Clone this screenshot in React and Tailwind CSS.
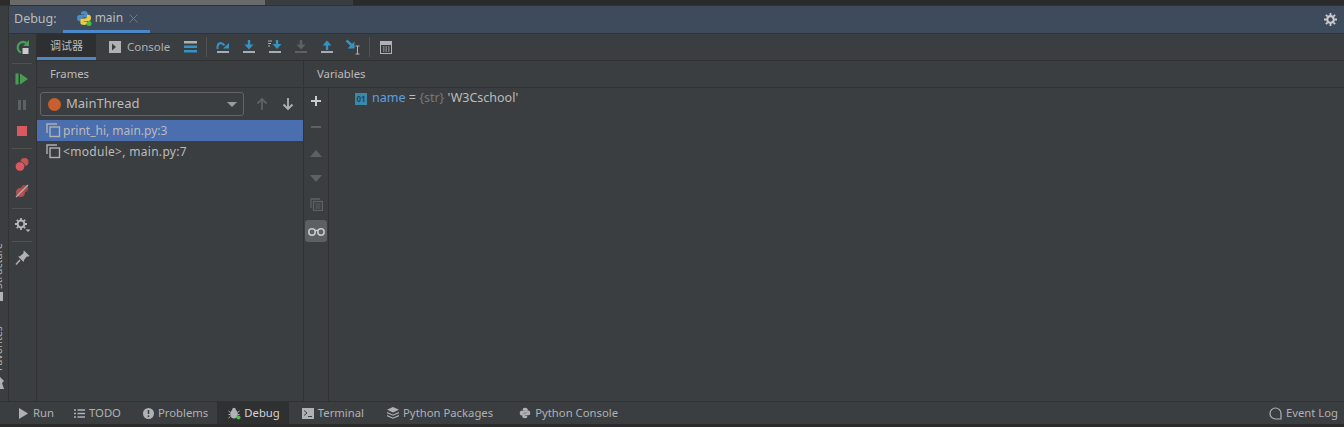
import React from 'react';

const BLUE = '#3592c4';
const GREY = '#afb1b3';
const BAR = '#a9adb0';

const Sep = () => <div className="w-px h-5 bg-[#515151]" />;
const VSep = ({ h }) => (
    <div className={`flex items-center justify-center shrink-0 w-full ${h}`}>
        <div className="h-px w-5 bg-[#515151]" />
    </div>
);
const Slot = ({ children }) => (
    <div className="flex items-center justify-center w-full h-[26px] shrink-0">{children}</div>
);

const FrameIcon = () => (
    <svg width="15" height="15" viewBox="0 0 15 15" fill="none" stroke="#afb1b3" strokeWidth="1.4" className="shrink-0">
        <path d="M1 10V1h10" />
        <rect x="4" y="4" width="9.5" height="9.5" />
    </svg>
);

const StepIcon = ({ children }) => (
    <div className="flex justify-center w-[26px] shrink-0">
        <svg width="16" height="16" viewBox="0 0 16 16" fill="none">{children}</svg>
    </div>
);

const PythonLogo = ({ size = 16, dot }) => (
    <svg width={size} height={size} viewBox="0 0 16 16">
        <path d="M8 1C5.500 1 5 2 5 3v1.500h3.200V5H3.200C2 5 1 6 1 8s1 3.200 2.200 3.200H5V9.600c0-1 1-2 2-2h3c1 0 1.600-.8 1.600-1.600V3c0-1-1.400-2-3.600-2z" fill="#4a8cc4" />
        <path d="M8 15c2.500 0 3-1 3-2v-1.500H7.800V11h5C14 11 15 10 15 8s-1-3.200-2.200-3.200H11v1.600c0 1-1 2-2 2H6c-1 0-1.600.8-1.600 1.600v3c0 1 1.400 2 3.600 2z" fill="#e8c94a" />
        {dot && <circle cx="13" cy="13.500" r="2.500" fill="#3fc43f" />}
    </svg>
);

const TopToolbar = () => (
    <div className="flex items-center h-[27px] shrink-0 bg-[#3b3e40] border-b border-[#323232]">
        <div className="flex items-center justify-center w-[59px] h-full bg-[#2d2f30] border-b-[3px] border-[#4a88c7] text-[#bbbbbb] text-[11px]" style={{ fontFamily: '"Noto Sans CJK SC", sans-serif' }}>
            调试器
        </div>
        <div className="flex items-center ml-[13px] text-[#afb1b3] text-[11.500px]">
            <svg width="12" height="12" viewBox="0 0 12 12">
                <rect width="12" height="12" fill="#afb1b3" />
                <path d="M3 2.500L7 6l-4 3.500z" fill="#3b3e40" />
            </svg>
            <span className="ml-[6px]">Console</span>
        </div>
        <svg width="13" height="12" viewBox="0 0 13 12" className="ml-[14px]">
            <rect y="0" width="13" height="2.500" fill={GREY} />
            <rect y="4.500" width="13" height="2.500" fill={BLUE} />
            <rect y="9" width="13" height="2.500" fill={BLUE} />
        </svg>
        <div className="ml-[9px]"><Sep /></div>
        <div className="flex items-center ml-[3px]">
            <StepIcon>
                <path d="M2.500 10V8C2.500 4 6.500 2.500 9.500 6.500" stroke={BLUE} strokeWidth="2" />
                <path d="M8 9.500h6v-5.500z" fill={BLUE} />
                <rect x="2" y="12" width="12" height="2" fill={BAR} />
            </StepIcon>
            <StepIcon>
                <path d="M8 1v6" stroke={BLUE} strokeWidth="2.400" />
                <path d="M3.500 5.500h9L8 10.500z" fill={BLUE} />
                <rect x="2" y="12" width="12" height="2" fill={BAR} />
            </StepIcon>
            <StepIcon>
                <path d="M10 1v5" stroke={BLUE} strokeWidth="2.400" />
                <path d="M5.500 5h9L10 10z" fill={BLUE} />
                <path d="M1 2h4M1 4.500h3M1 7h2" stroke={GREY} strokeWidth="1" />
                <rect x="2" y="12" width="12" height="2" fill={BAR} />
            </StepIcon>
            <StepIcon>
                <path d="M8 1v6" stroke="#5e6163" strokeWidth="2.400" />
                <path d="M3.500 5.500h9L8 10.500z" fill="#5e6163" />
                <rect x="2" y="12" width="12" height="2" fill="#5e6163" />
            </StepIcon>
            <StepIcon>
                <path d="M8 11V5" stroke={BLUE} strokeWidth="2.400" />
                <path d="M3.500 6.500h9L8 1.500z" fill={BLUE} />
                <rect x="2" y="12" width="12" height="2" fill={BAR} />
            </StepIcon>
            <StepIcon>
                <path d="M1.500 1.500L7 6.500" stroke={BLUE} strokeWidth="2.400" />
                <path d="M9.500 2.500V9.500H2.500z" fill={BLUE} />
                <path d="M10.500 7h4M12.500 7v8M10.500 15h4" stroke={GREY} strokeWidth="1" />
            </StepIcon>
        </div>
        <div className="ml-[3px]"><Sep /></div>
        <svg width="12" height="13" viewBox="0 0 12 13" fill="none" stroke={GREY} strokeWidth="1" className="ml-[10px]">
            <rect x=".5" y=".5" width="11" height="12" />
            <rect x=".5" y=".5" width="11" height="3" fill={GREY} />
            <path d="M3 6h1.500M5.500 6H7M8 6h1.500M3 8h1.500M5.500 8H7M8 8h1.500M3 10h1.500M5.500 10H7M8 10h1.500" strokeWidth="1.200" />
        </svg>
    </div>
);

const SideButtons = () => (
    <div className="flex flex-col items-center w-[28px] shrink-0 bg-[#3b3e40] border-r border-[#323232] pr-px">
        <Slot>
            <svg width="16" height="16" viewBox="0 0 16 16" fill="none">
                <path d="M13 4.500A5.500 5.500 0 1 0 7 13.500" stroke="#499c54" strokeWidth="2.400" />
                <path d="M9 7h6V1z" fill="#499c54" />
                <rect x="8.500" y="9" width="6" height="6" fill="#c9cbcd" />
            </svg>
        </Slot>
        <VSep h="h-[6px]" />
        <Slot>
            <svg width="14" height="14" viewBox="0 0 14 14">
                <rect x="0.500" y="1.500" width="3" height="11" fill="#499c54" />
                <path d="M5 1.500L13 7l-8 5.500z" fill="#499c54" />
            </svg>
        </Slot>
        <Slot>
            <svg width="12" height="12" viewBox="0 0 12 12">
                <rect x="2" y="1" width="3" height="10" fill="#5e6163" />
                <rect x="7" y="1" width="3" height="10" fill="#5e6163" />
            </svg>
        </Slot>
        <Slot><div className="w-[10px] h-[10px] bg-[#db5860]" /></Slot>
        <VSep h="h-[8px]" />
        <Slot>
            <svg width="16" height="16" viewBox="0 0 16 16">
                <circle cx="10.500" cy="5" r="4" fill="#c75450" />
                <circle cx="6" cy="9.500" r="4.800" fill="#db5860" stroke="#3b3e40" strokeWidth="0.800" />
            </svg>
        </Slot>
        <Slot>
            <svg width="16" height="16" viewBox="0 0 16 16">
                <circle cx="10.500" cy="5.500" r="3.500" fill="#a34a48" />
                <circle cx="6.500" cy="9.500" r="4.500" fill="#b5504f" />
                <path d="M2 14L14 2" stroke="#afb1b3" strokeWidth="1.300" />
            </svg>
        </Slot>
        <VSep h="h-[8px]" />
        <Slot>
            <svg width="17" height="16" viewBox="0 0 17 16">
                <circle cx="7" cy="7" r="3.400" fill="none" stroke="#b5b7b9" strokeWidth="2" />
                <path d="M7 1v2M7 11v2M1 7h2M11 7h2M2.800 2.800L4.200 4.200M9.800 9.800l1.400 1.400M2.800 11.200l1.400-1.400M9.800 4.200l1.400-1.400" stroke="#b5b7b9" strokeWidth="1.800" />
                <path d="M11.500 12.500h5L14 15z" fill="#b5b7b9" />
            </svg>
        </Slot>
        <VSep h="h-[6px]" />
        <Slot>
            <svg width="15" height="15" viewBox="0 0 15 15">
                <path d="M9 .5L14.500 6l-1.500.7-1-.4L9 10l-.3 2L3 6.500l2-.3L8.700 3l-.4-1z" fill="#afb1b3" />
                <path d="M5 10L1 14.500" stroke="#afb1b3" strokeWidth="1.500" />
            </svg>
        </Slot>
    </div>
);

const FramesPanel = () => (
    <div className="flex flex-col w-[267px] shrink-0 border-r border-[#323232] bg-[#3b3e40]">
        <div className="h-[27px] flex items-center pl-[13px] text-[11.300px] text-[#bbbbbb] border-b border-[#323232] shrink-0">Frames</div>
        <div className="h-[32px] flex items-center pl-[3px] shrink-0">
            <div className="flex items-center w-[204px] h-[24px] border border-[#646464] rounded-[3px] bg-[#3b3e40] pl-[7px] pr-[6px]">
                <div className="w-[13px] h-[13px] rounded-full bg-[#c75f2f] shrink-0" />
                <span className="ml-[5px] text-[13px] text-[#bbbbbb]">MainThread</span>
                <svg width="10" height="5" viewBox="0 0 10 5" className="ml-auto"><path d="M0 0h10L5 5z" fill="#9a9c9e" /></svg>
            </div>
            <svg width="14" height="14" viewBox="0 0 14 14" fill="none" stroke="#5e6163" strokeWidth="1.800" className="ml-[11px]"><path d="M7 13V2M2.500 6.500L7 2l4.500 4.500" /></svg>
            <svg width="14" height="14" viewBox="0 0 14 14" fill="none" stroke="#afb1b3" strokeWidth="1.800" className="ml-[12px]"><path d="M7 1v11M2.500 7.500L7 12l4.500-4.500" /></svg>
        </div>
        <div className="h-[21px] flex items-center pl-[9px] bg-[#4b6eaf] text-[12px] text-[#bbbbbb] shrink-0">
            <FrameIcon />
            <span className="ml-[2px]">print_hi, main.py:3</span>
        </div>
        <div className="h-[21px] flex items-center pl-[9px] text-[12px] text-[#bbbbbb] shrink-0">
            <FrameIcon />
            <span className="ml-[2px] tracking-[0.3px]">&lt;module&gt;, main.py:7</span>
        </div>
    </div>
);

const VariablesPanel = () => (
    <div className="flex flex-col flex-1 min-w-0 bg-[#3b3e40]">
        <div className="h-[27px] flex items-center pl-[13px] text-[11.300px] text-[#bbbbbb] border-b border-[#323232] shrink-0">Variables</div>
        <div className="flex flex-1 min-h-0">
            <div className="flex flex-col items-center w-[25px] shrink-0 border-r border-[#323232] pt-[7px]">
                <svg width="12" height="12" viewBox="0 0 12 12"><path d="M6 1v10M1 6h10" stroke="#c9cbcd" strokeWidth="2" /></svg>
                <svg width="12" height="12" viewBox="0 0 12 12" className="mt-[14px]"><path d="M1 6h10" stroke="#5e6163" strokeWidth="2" /></svg>
                <svg width="12" height="7" viewBox="0 0 12 7" className="mt-[17px]"><path d="M0 7L6 0l6 7z" fill="#5e6163" /></svg>
                <svg width="12" height="7" viewBox="0 0 12 7" className="mt-[18px]"><path d="M0 0l6 7 6-7z" fill="#5e6163" /></svg>
                <svg width="13" height="13" viewBox="0 0 13 13" fill="none" stroke="#5e6163" strokeWidth="1.300" className="mt-[16px]">
                    <path d="M1 10V1h9" />
                    <rect x="3.500" y="3.500" width="9" height="9" />
                    <path d="M5.500 6h5M5.500 8h5M5.500 10h5" strokeWidth="1" />
                </svg>
                <div className="flex items-center justify-center w-[22px] h-[22px] rounded-[3px] bg-[#5d6061] mt-[9px] shrink-0">
                    <svg width="17" height="9" viewBox="0 0 17 9" fill="none" stroke="#c9cbcd" strokeWidth="1.500">
                        <circle cx="4" cy="5" r="3.200" />
                        <circle cx="13" cy="5" r="3.200" />
                        <path d="M7 3.500h3" />
                    </svg>
                </div>
            </div>
            <div className="flex-1 pl-[26px] pt-[3px]">
                <div className="flex items-center h-[15px] text-[12.500px] whitespace-pre">
                    <div className="w-[12px] h-[12px] bg-[#3b88a8] text-[#1f4a5c] text-[8px] leading-[12px] text-center font-bold shrink-0">01</div>
                    <span className="ml-[5px] text-[#5c9fe0]">name</span>
                    <span className="text-[#bbbbbb]"> = </span>
                    <span className="text-[#787878]">{'{str}'} </span>
                    <span className="text-[#bbbbbb]">'W3Cschool'</span>
                </div>
            </div>
        </div>
    </div>
);

const BottomItem = ({ icon, label, active, className, textGap = 'ml-[4px]' }) => (
    <div className={`flex items-center h-full text-[11.300px] ${className} ${active ? 'bg-[#2e3031] text-[#d4d4d4]' : 'text-[#afb1b3]'}`}>
        {icon}
        <span className={`${textGap} mt-px`}>{label}</span>
    </div>
);

const BottomBar = () => (
    <div className="flex items-center h-[22px] pl-[8px] pr-[6px] bg-[#3b3e40] shrink-0">
        <BottomItem className="pl-[10px] pr-[9px]" textGap="ml-[5px]" label="Run" icon={<svg width="10" height="11" viewBox="0 0 10 11"><path d="M1 0l9 5.500L1 11z" fill={GREY} /></svg>} />
        <BottomItem className="pl-[11px] pr-[11px]" label="TODO" icon={
            <svg width="11" height="9" viewBox="0 0 11 9" fill="none" stroke={GREY} strokeWidth="1.500"><path d="M0 1h2M0 4.500h2M0 8h2M3.500 1H11M3.500 4.500H11M3.500 8H11" /></svg>
        } />
        <BottomItem className="pl-[11px] pr-[9px]" label="Problems" icon={
            <svg width="11" height="11" viewBox="0 0 11 11"><circle cx="5.500" cy="5.500" r="5.500" fill={GREY} /><path d="M5.500 2v4" stroke="#3b3e40" strokeWidth="1.500" /><circle cx="5.500" cy="8.200" r=".9" fill="#3b3e40" /></svg>
        } />
        <BottomItem active className="pl-[11px] pr-[9px]" textGap="ml-[3px]" label="Debug" icon={
            <svg width="13" height="13" viewBox="0 0 13 13" fill="none">
                <ellipse cx="6" cy="7" rx="3.800" ry="4.500" fill={GREY} />
                <circle cx="6" cy="2.500" r="1.800" fill={GREY} />
                <path d="M.5 4l2 1.500M.5 7.500h2M.5 11l2-1.500M11.500 4l-2 1.500M11.500 7.500h-2" stroke={GREY} strokeWidth="1" />
                <circle cx="10.500" cy="10.500" r="2" fill="#3fc43f" />
            </svg>
        } />
        <BottomItem className="pl-[13px] pr-[11px]" label="Terminal" icon={
            <svg width="12" height="11" viewBox="0 0 12 11"><rect width="12" height="11" fill={GREY} /><path d="M2 2.500L5 5 2 7.500" stroke="#3b3e40" fill="none" /><path d="M6 8.500h4" stroke="#3b3e40" /></svg>
        } />
        <BottomItem className="pl-[12px] pr-[13px]" label="Python Packages" icon={
            <svg width="12" height="12" viewBox="0 0 12 12"><path d="M6 0l6 2.700-6 2.700L0 2.700z" fill={GREY} /><path d="M0 5.500l6 2.700 6-2.700M0 8.500l6 2.700 6-2.700" fill="none" stroke={GREY} strokeWidth="1.200" /></svg>
        } />
        <BottomItem className="pl-[13px]" label="Python Console" icon={
            <svg width="12" height="12" viewBox="0 0 16 16">
                <path d="M8 1C5.500 1 5 2 5 3v1.500h3.200V5H3.200C2 5 1 6 1 8s1 3.200 2.200 3.200H5V9.600c0-1 1-2 2-2h3c1 0 1.600-.8 1.600-1.600V3c0-1-1.400-2-3.600-2z" fill={GREY} />
                <path d="M8 15c2.500 0 3-1 3-2v-1.500H7.800V11h5C14 11 15 10 15 8s-1-3.200-2.200-3.200H11v1.600c0 1-1 2-2 2H6c-1 0-1.600.8-1.600 1.600v3c0 1 1.400 2 3.600 2z" fill={GREY} />
            </svg>
        } />
        <div className="ml-auto flex items-center text-[11.300px] text-[#afb1b3]">
            <svg width="13" height="13" viewBox="0 0 13 13" fill="none" stroke={GREY} strokeWidth="1.200">
                <path d="M12 12H6.500A5.500 5.500 0 1 1 12 6.500z" />
            </svg>
            <span className="ml-[4px] mt-px">Event Log</span>
        </div>
    </div>
);

const App = () => {
    return (
        <div className="flex flex-col w-[1344px] h-[427px] overflow-hidden bg-[#3b3e40]" style={{ fontFamily: '"Noto Sans", "Open Sans", sans-serif' }}>
            {/* sliver of the editor scrollbar above the tool window */}
            <div className="flex h-[5px] shrink-0 bg-[#2b2b2b] pl-[10px]">
                <div className="w-[255px] bg-[#6a6a6a]" />
                <div className="w-[88px] bg-[#3b3e40]" />
            </div>
            <div className="h-px bg-[#323232] shrink-0" />

            <div className="flex flex-1 min-h-0">
                {/* left tool strip with the clipped vertical labels */}
                <div className="flex flex-col justify-end w-[9px] shrink-0 bg-[#3b3e40] border-r border-[#323232] overflow-hidden text-[10.500px] text-[#afb1b3] pb-[12px]">
                    <div className="h-[50px] -ml-[9px] [writing-mode:vertical-rl] rotate-180 whitespace-nowrap mb-[3px]">Structure</div>
                    <div className="w-[3px] h-[9px] bg-[#afb1b3] mb-[23px] shrink-0" />
                    <div className="h-[47px] -ml-[9px] [writing-mode:vertical-rl] rotate-180 whitespace-nowrap mb-[6px]">Favorites</div>
                    <svg width="4" height="12" viewBox="0 0 4 12" className="shrink-0"><path d="M0 0L4 4 2 6l2 6H0z" fill="#afb1b3" /></svg>
                </div>

                <div className="flex flex-col flex-1 min-w-0">
                    <div className="flex items-center h-[28px] shrink-0 bg-[#3d4b5c] border-b border-[#323232] pl-[5px] pr-[7px] text-[12.500px] text-[#bbbbbb]">
                        <span>Debug:</span>
                        <div className="flex items-center h-full ml-[6px] pl-[13px] pr-[12px] border-b-[3px] border-[#4a88c7]">
                            <PythonLogo dot />
                            <span className="ml-[3px] text-[12px]">main</span>
                            <svg width="9" height="9" viewBox="0 0 9 9" className="ml-[6px]"><path d="M.5.500l8 8M8.500.500l-8 8" stroke="#6f7a86" strokeWidth="1" /></svg>
                        </div>
                        <svg width="13" height="13" viewBox="0 0 13 13" className="ml-auto" fill="none">
                            <circle cx="6.500" cy="6.500" r="3.300" stroke="#c9cbcd" strokeWidth="2.200" />
                            <path d="M6.500 0v2.500M6.500 10.500V13M0 6.500h2.500M10.500 6.500H13M1.900 1.900l1.800 1.800M9.300 9.300l1.800 1.800M1.900 11.100l1.800-1.800M9.300 3.700l1.800-1.800" stroke="#c9cbcd" strokeWidth="1.800" />
                        </svg>
                    </div>

                    <div className="flex flex-1 min-h-0">
                        <SideButtons />
                        <div className="flex flex-col flex-1 min-w-0">
                            <TopToolbar />
                            <div className="flex flex-1 min-h-0">
                                <FramesPanel />
                                <VariablesPanel />
                            </div>
                        </div>
                    </div>
                </div>
            </div>

            <div className="h-px bg-[#323232] shrink-0" />
            <BottomBar />
            <div className="h-[3px] bg-[#2b2b2b] shrink-0" />
        </div>
    );
};

export default App;
